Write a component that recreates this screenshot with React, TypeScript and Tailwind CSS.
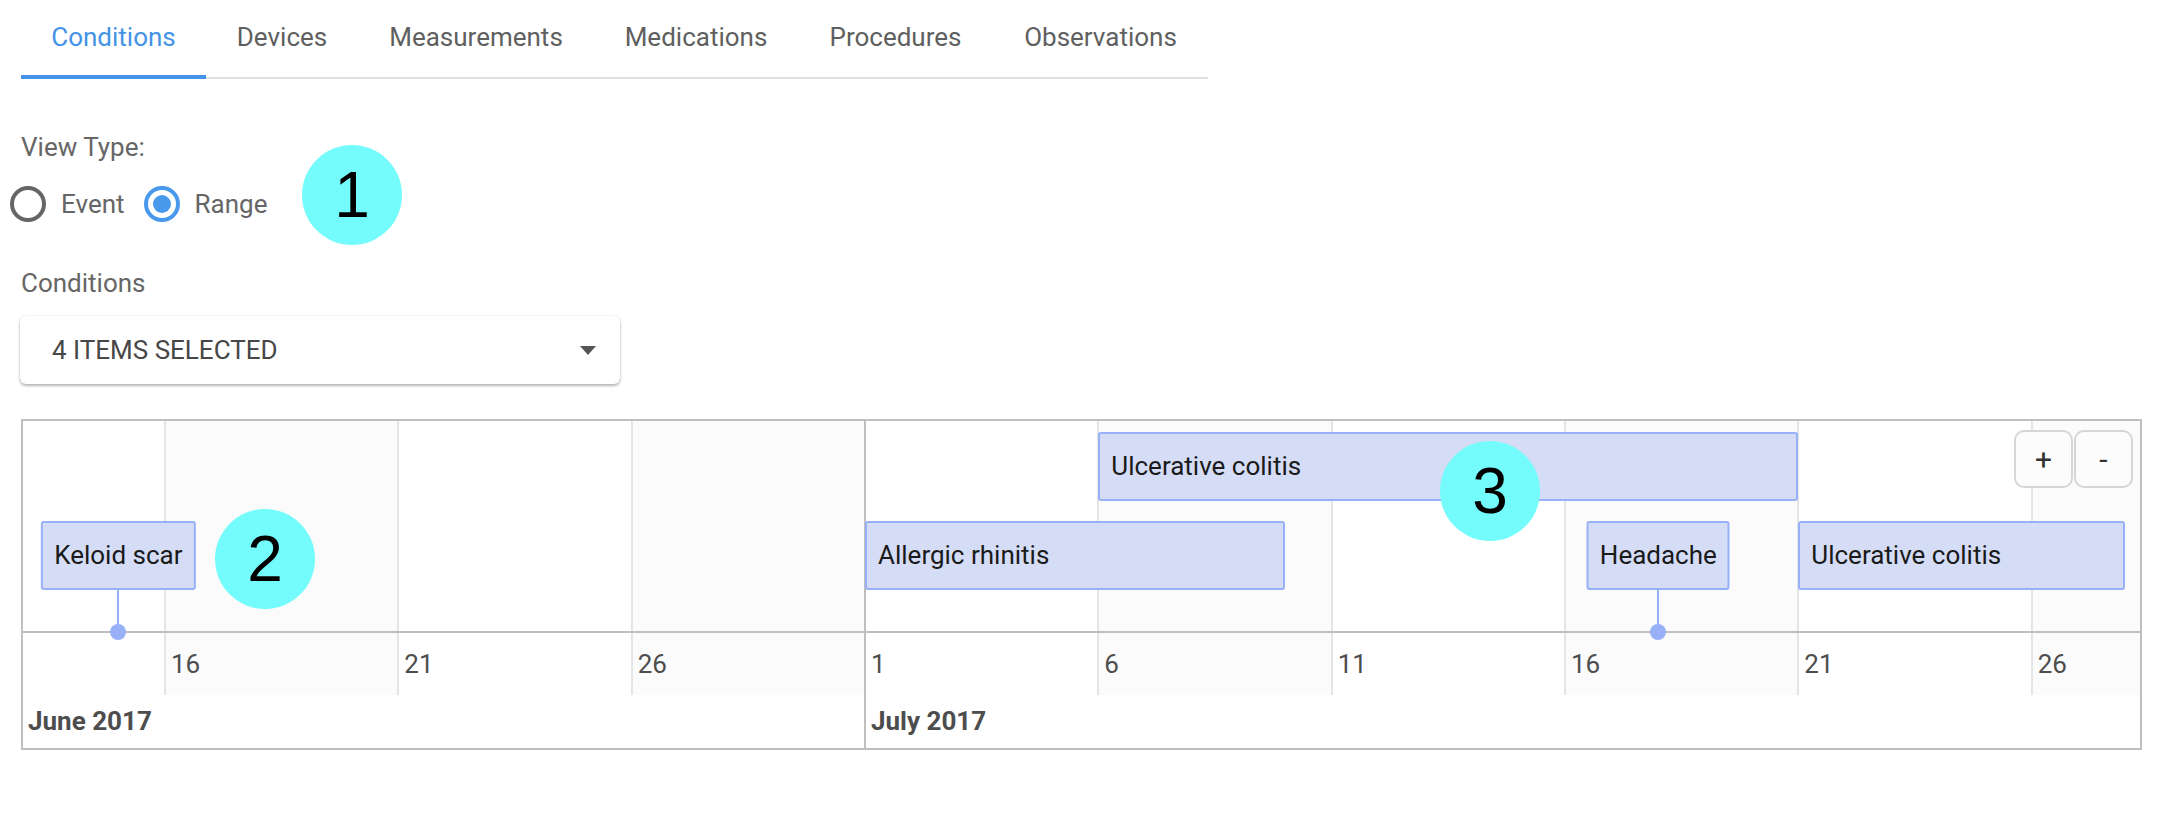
import React from 'react';

interface Tab {
    label: string;
    width: string;
}

interface TimelineItem {
    id: number;
    content: string;
    start: number;
    end?: number;
    row: 1 | 2;
}

// day offsets are counted from June 16, 2017
const ORIGIN = 142;
const PX_PER_DAY = 233.333 / 5;
const x = (d: number) => ORIGIN + d * PX_PER_DAY;

const tabs: Tab[] = [
    { label: 'Conditions', width: 'w-[185px]' },
    { label: 'Devices', width: 'w-[152px]' },
    { label: 'Measurements', width: 'w-[236px]' },
    { label: 'Medications', width: 'w-[204px]' },
    { label: 'Procedures', width: 'w-[195px]' },
    { label: 'Observations', width: 'w-[215px]' },
];

const items: TimelineItem[] = [
    { id: 1, content: 'Keloid scar', start: -1, row: 2 },
    { id: 2, content: 'Allergic rhinitis', start: 15, end: 24, row: 2 },
    { id: 3, content: 'Ulcerative colitis', start: 20, end: 35, row: 1 },
    { id: 4, content: 'Headache', start: 32, row: 2 },
    { id: 5, content: 'Ulcerative colitis', start: 35, end: 42, row: 2 },
];

const columns = [-5, 0, 5, 10, 15, 20, 25, 30, 35, 40].map((d) => {
    const dayOfMonth = d < 15 ? 16 + d : d - 14;
    return { d, dayOfMonth, major: d === 15, shaded: dayOfMonth % 2 === 0 };
});

function GridColumns({ labels }: { labels?: boolean }) {
    return (
        <>
            {columns.map((c) => (
                <div
                    key={c.d}
                    className={`absolute top-0 bottom-0 border-l-2 ${c.major ? 'border-[#bfbfbf]' : 'border-[#e5e5e5]'} ${c.shaded ? 'bg-[#fbfbfb]' : 'bg-white'}`}
                    style={{ left: x(c.d) - 1, width: x(c.d + 5) - x(c.d) }}
                >
                    {labels && c.d >= 0 && (
                        <span className="absolute left-[5px] top-[16px] text-[26px] leading-[30px] text-[#4d4d4d]">
                            {c.dayOfMonth}
                        </span>
                    )}
                </div>
            ))}
        </>
    );
}

function Annotation({ n, className }: { n: number; className: string }) {
    return (
        <div
            className={`absolute flex h-[100px] w-[100px] items-center justify-center rounded-full bg-[#74fbfc] font-['Liberation_Sans',Arial,sans-serif] text-[64px] leading-none text-black ${className}`}
        >
            {n}
        </div>
    );
}

export default function App() {
    return (
        <div className="relative min-h-screen bg-white pl-[21px] font-['Roboto','Noto_Sans',sans-serif]">
            {/* tabs */}
            <div className="relative flex h-[79px] w-[1187px] border-b-2 border-[#e0e0e0]">
                {tabs.map((tab, i) => (
                    <div
                        key={tab.label}
                        className={`flex items-center justify-center pb-[3px] text-[26px] ${tab.width} ${i === 0 ? 'text-[#4393e6]' : 'text-[#5f5f5f]'}`}
                    >
                        {tab.label}
                    </div>
                ))}
                <div className="absolute bottom-[-2px] left-0 h-[4px] w-[185px] bg-[#4393e6]" />
            </div>

            {/* view type */}
            <div className="mt-[53px] text-[26px] leading-[30px] text-[#666]">View Type:</div>
            <div className="-ml-[11px] mt-[24px] flex h-[36px] items-center text-[26px] text-[#666]">
                <span className="h-[36px] w-[36px] rounded-full border-[4px] border-[#666]" />
                <span className="ml-[15px]">Event</span>
                <span className="ml-[19px] flex h-[36px] w-[36px] items-center justify-center rounded-full border-[4px] border-[#4899ec]">
                    <span className="h-[18px] w-[18px] rounded-full bg-[#4899ec]" />
                </span>
                <span className="ml-[15px]">Range</span>
            </div>

            {/* condition select */}
            <div className="mt-[46px] text-[26px] leading-[30px] text-[#666]">Conditions</div>
            <div className="-ml-px mt-[18px] flex h-[68px] w-[600px] items-center justify-between rounded-[6px] bg-white pl-[32px] pr-[24px] shadow-[0_2px_3px_rgba(0,0,0,0.28),0_0_3px_rgba(0,0,0,0.08)]">
                <span className="text-[26px] uppercase text-[#474747]">4 Items selected</span>
                <svg width="16" height="9" viewBox="0 0 16 9">
                    <path d="M0 0 L16 0 L8 9 Z" fill="#555" />
                </svg>
            </div>

            {/* timeline */}
            <div className="relative mt-[35px] h-[331px] w-[2121px] overflow-hidden border-2 border-[#bfbfbf] bg-white">
                <div className="flex h-full flex-col">
                    <div className="relative h-[210px]">
                        <GridColumns />
                        {items.map((item) => {
                            const top = item.row === 1 ? 'top-[11px]' : 'top-[100px]';
                            if (item.end !== undefined) {
                                return (
                                    <div
                                        key={item.id}
                                        className={`absolute ${top} flex h-[69px] items-center rounded-[3px] border-2 border-[#97b0f8] bg-[#d5ddf6] pl-[11px] text-[26px] text-[#1a1a1a]`}
                                        style={{ left: x(item.start), width: x(item.end) - x(item.start) }}
                                    >
                                        {item.content}
                                    </div>
                                );
                            }
                            return (
                                <div key={item.id}>
                                    <div
                                        className={`absolute ${top} flex h-[69px] -translate-x-1/2 items-center whitespace-nowrap rounded-[3px] border-2 border-[#97b0f8] bg-[#d5ddf6] px-[11px] text-[26px] text-[#1a1a1a]`}
                                        style={{ left: x(item.start) }}
                                    >
                                        {item.content}
                                    </div>
                                    <div
                                        className="absolute top-[169px] h-[41px] w-[2px] bg-[#97b0f8]"
                                        style={{ left: x(item.start) - 1 }}
                                    />
                                    <div
                                        className="absolute top-[203px] z-10 h-[16px] w-[16px] rounded-full bg-[#97b0f8]"
                                        style={{ left: x(item.start) - 8 }}
                                    />
                                </div>
                            );
                        })}
                        <div className="absolute right-[7px] top-[9px] z-10 flex gap-px">
                            <button className="flex h-[58px] w-[59px] items-center justify-center rounded-[10px] border-2 border-[#d6d6d6] bg-[#fcfcfc] text-[30px] text-[#333]">
                                +
                            </button>
                            <button className="flex h-[58px] w-[59px] items-center justify-center rounded-[10px] border-2 border-[#d6d6d6] bg-[#fcfcfc] text-[30px] text-[#333]">
                                -
                            </button>
                        </div>
                    </div>
                    <div className="h-[2px] bg-[#bfbfbf]" />
                    <div className="relative h-[62px]">
                        <GridColumns labels />
                    </div>
                    <div className="relative flex-1">
                        <div className="absolute top-0 bottom-0 w-[2px] bg-[#bfbfbf]" style={{ left: x(15) - 1 }} />
                        <span className="absolute left-[5px] top-[11px] text-[26px] font-bold leading-[30px] text-[#4d4d4d]">
                            June 2017
                        </span>
                        <span
                            className="absolute top-[11px] text-[26px] font-bold leading-[30px] text-[#4d4d4d]"
                            style={{ left: x(15) + 6 }}
                        >
                            July 2017
                        </span>
                    </div>
                </div>
            </div>

            {/* numbered callouts */}
            <Annotation n={1} className="left-[302px] top-[145px]" />
            <Annotation n={2} className="left-[215px] top-[509px]" />
            <Annotation n={3} className="left-[1440px] top-[441px]" />
        </div>
    );
}
